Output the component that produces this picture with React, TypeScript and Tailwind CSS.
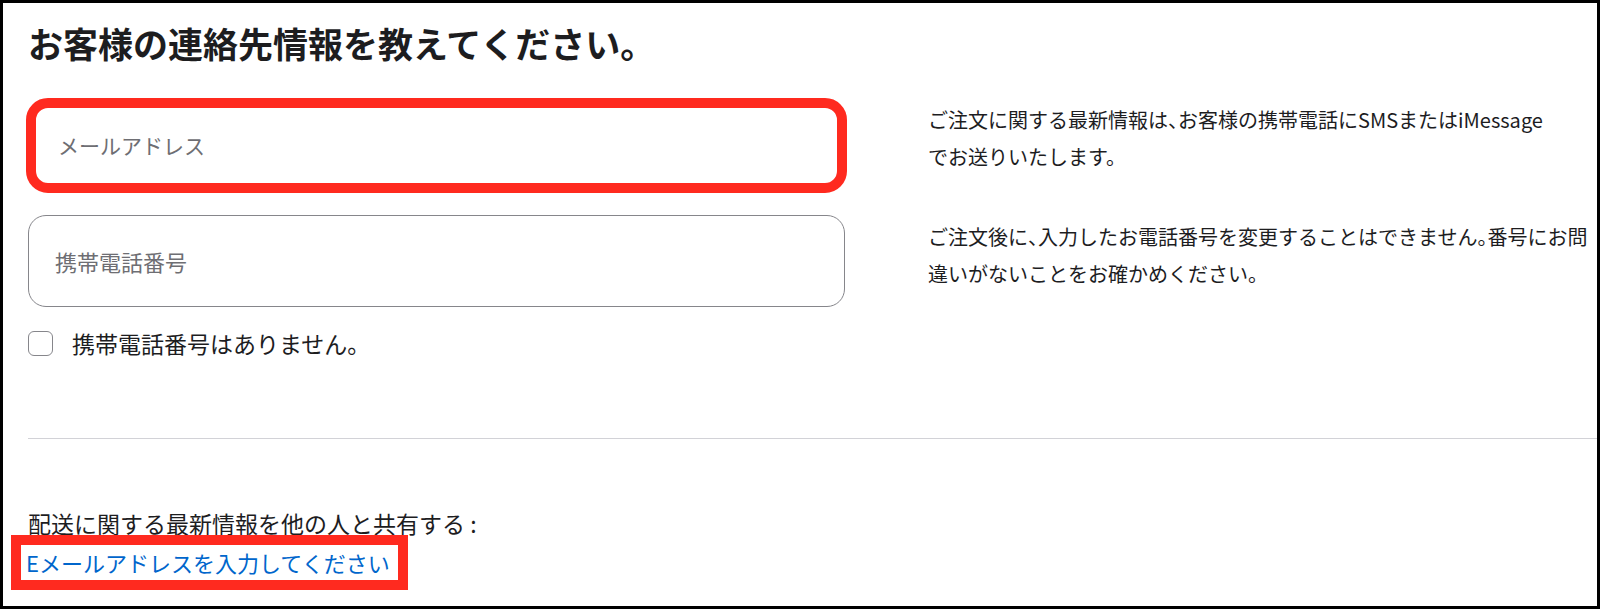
import React, { useState } from 'react';

const FONT = { fontFamily: '"Noto Sans CJK JP", "Noto Sans", sans-serif' };

// half-width punctuation inside running text, like the original's proportional set
const Punct: React.FC<{ children: React.ReactNode }> = ({ children }) => (
  <span className="[font-feature-settings:'halt']">{children}</span>
);

const App: React.FC = () => {
  const [noPhone, setNoPhone] = useState(false);

  return (
    <div
      className="w-[1600px] h-[609px] border-[3px] border-black bg-white overflow-hidden text-[#1d1d1f]"
      style={FONT}
    >
      <div className="pl-[25px] pt-[18px]">
        <h1 className="text-[35px] leading-[44px] font-semibold">お客様の連絡先情報を教えてください。</h1>

        {/* email row */}
        <div className="flex items-start mt-[33px]">
          <div className="w-[817px] shrink-0">
            <div className="-mx-[2px] h-[95px] border-[10px] border-[#ff2a1f] rounded-[22px] flex items-center pl-[22px]">
              <input
                type="email"
                placeholder="メールアドレス"
                className="w-full bg-transparent outline-none text-[21px] placeholder:text-[#6e6e73]"
              />
            </div>
          </div>
          <p className="ml-[83px] w-[660px] pt-[3px] text-[20px] leading-[37px] whitespace-nowrap">
            ご注文に関する最新情報は<Punct>、</Punct>お客様の携帯電話にSMSまたはiMessage
            <br />
            でお送りいたします。
          </p>
        </div>

        {/* phone row */}
        <div className="flex items-start mt-[22px]">
          <div className="w-[817px] shrink-0">
            <div className="h-[92px] border border-[#86868b] rounded-[18px] flex items-center px-[26px]">
              <input
                type="tel"
                placeholder="携帯電話番号"
                className="w-full bg-transparent outline-none text-[22px] placeholder:text-[#6e6e73]"
              />
            </div>
            <label className="flex items-center gap-[19px] mt-[23px] cursor-pointer">
              <span
                onClick={() => setNoPhone(!noPhone)}
                className={`w-[25px] h-[25px] rounded-[6px] border flex items-center justify-center ${noPhone ? 'bg-[#0071e3] border-[#0071e3]' : 'border-[#86868b] bg-white'}`}
              />
              <span className="text-[23px] leading-[26px]">携帯電話番号はありません。</span>
            </label>
          </div>
          <p className="ml-[83px] w-[660px] pt-[3px] text-[20px] leading-[37px] whitespace-nowrap">
            ご注文後に<Punct>、</Punct>入力したお電話番号を変更することはできません<Punct>。</Punct>番号にお問
            <br />
            違いがないことをお確かめください。
          </p>
        </div>

        <div className="mt-[82px] h-px bg-[#d2d2d7]" />

        <p className="mt-[71px] text-[23px] leading-[26px]">配送に関する最新情報を他の人と共有する :</p>
        <a
          href="#"
          className="inline-block -ml-[17px] -mt-[1px] border-[10px] border-[#ff2a1f] pl-[5px] pr-[8px] text-[22px] leading-[35px] text-[#0066cc]"
        >
          Eメールアドレスを入力してください
        </a>
      </div>
    </div>
  );
};

export default App;
